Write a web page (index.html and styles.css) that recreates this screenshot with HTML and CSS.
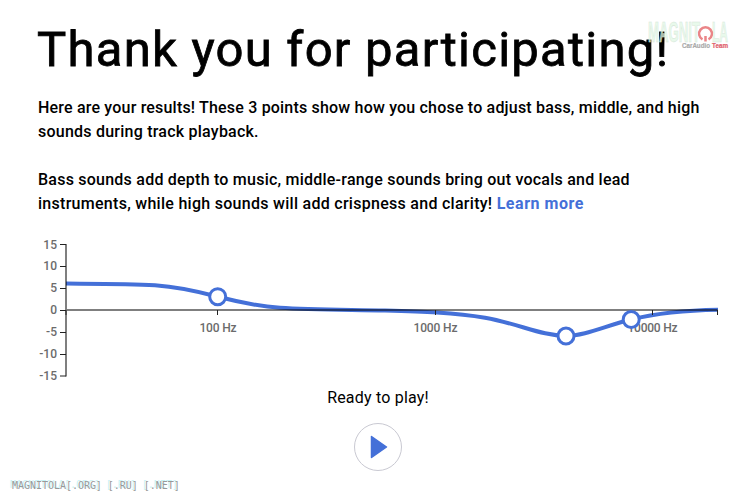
FILE: index.html
```html
<!DOCTYPE html>
<html lang="en">

<head>
    <meta charset="UTF-8">
    <meta name="viewport" content="width=device-width, initial-scale=1.0">
    <title>Your results</title>
    <link rel="stylesheet" href="styles.css">
</head>

<body>
    <main class="results">
        <h1 class="title">Thank you for participating!</h1>

        <p class="text">
            <span class="line line-1">Here are your results! These 3 points show how you chose to adjust bass, middle, and high</span>
            <span class="line line-2">sounds during track playback.</span>
        </p>
        <p class="text">
            <span class="line line-3">Bass sounds add depth to music, middle-range sounds bring out vocals and lead</span>
            <span class="line line-4">instruments, while high sounds will add crispness and clarity! <a class="link" href="#">Learn more</a></span>
        </p>

        <svg class="chart" width="710" height="154" viewBox="30 232 710 154">
            <!-- frequency labels -->
            <g class="labels labels-x">
                <text x="218" y="332" textLength="37">100 Hz</text>
                <text x="435.5" y="332" textLength="44">1000 Hz</text>
                <text x="652.5" y="332" textLength="50">10000 Hz</text>
            </g>
            <!-- gain labels -->
            <g class="labels labels-y">
                <text x="57" y="249">15</text>
                <text x="57" y="270">10</text>
                <text x="57" y="292">5</text>
                <text x="57" y="314">0</text>
                <text x="57" y="336">-5</text>
                <text x="57" y="358">-10</text>
                <text x="57" y="380">-15</text>
            </g>
            <path class="curve" d="M66 283.6C105 283.8 130 283.7 155 285.3C180 287 200 292 218 296.8C240 302.5 256 306 280 307.8C310 310 350 309.7 385 310.5C420 311.5 455 312.5 485 317.8C520 324 541 335.8 566 335.8C585 335.8 605 326 631 319.5C660 312.5 685 310.3 718 309.8" />
            <g class="axis">
                <path d="M66 244V376.5M66 310H717.5" />
            </g>
            <path class="tick" d="M60 244.5H66M60 266.5H66M60 288.5H66M60 310.5H66M60 332.5H66M60 354.5H66M60 376H66M66 310V315M217.5 310V315M435.5 310V315M652.5 310V315M717.5 310V315" />
            <circle class="point" cx="217.7" cy="296.7" r="8" />
            <circle class="point" cx="566" cy="336" r="8" />
            <circle class="point" cx="631.2" cy="319.5" r="8" />
        </svg>

        <div class="player">
            <span class="status">Ready to play!</span>
            <button class="play" aria-label="Play">
                <svg width="18" height="24" viewBox="0 0 18 24">
                    <path d="M1.5 1.5V22.5L16.5 12Z" />
                </svg>
            </button>
        </div>
    </main>

    <svg class="logo" width="84" height="32" viewBox="0 0 84 32">
        <g class="logo-name">
            <text x="1" y="21.5" textLength="52" lengthAdjust="spacingAndGlyphs">MAGNIT</text>
            <text x="65" y="21.5" textLength="16" lengthAdjust="spacingAndGlyphs">LA</text>
        </g>
        <path class="logo-ring" d="M55.5 19.3A6.4 6.4 0 1 1 61.5 19.3M58.5 16V21.5" />
        <text class="logo-sub" x="35" y="28" textLength="28" lengthAdjust="spacingAndGlyphs">CarAudio</text>
        <text class="logo-sub logo-team" x="65" y="28" textLength="16" lengthAdjust="spacingAndGlyphs">Team</text>
    </svg>

    <div class="domains">MAGNITOLA[.ORG] [.RU] [.NET]</div>
</body>

</html>
```
FILE: styles.css
```css
body {
    margin: 0;
    height: 495px;
    position: relative;
    overflow: hidden;
    background-color: #fff;
    color: #000;
    font-family: Roboto, sans-serif;
}

.results {
    padding: 20px 8px 0 37px;
}

.title {
    margin: 0 0 16px;
    font-size: 49px;
    line-height: 60px;
    font-weight: 400;
    letter-spacing: 1.25px;
    white-space: nowrap;
    -webkit-text-stroke: 0.8px #000;
}

.text {
    margin: 0 0 24px 1px;
    font-size: 16px;
    line-height: 24px;
    font-weight: 500;
}

.line {
    display: block;
    width: max-content;
    white-space: nowrap;
}

.line-1 {
    letter-spacing: 0.19px;
}

.line-2,
.line-3 {
    letter-spacing: 0.23px;
}

.line-4 {
    letter-spacing: 0.28px;
}

.link {
    color: #4470d8;
    font-weight: 700;
    letter-spacing: 0.55px;
    text-decoration: none;
}

.chart {
    display: block;
    margin: -8px 0 0 -7px;
}

.labels {
    fill: #6b6b6b;
    font-size: 12px;
    font-weight: 500;
}

.labels-x {
    text-anchor: middle;
}

.labels-y {
    text-anchor: end;
}

.curve {
    fill: none;
    stroke: #4470d8;
    stroke-width: 4;
}

.axis {
    fill: none;
    stroke: #000;
    stroke-opacity: 0.5;
    stroke-width: 2;
}

.tick {
    stroke: #222;
    stroke-width: 1;
}

.point {
    fill: #fff;
    stroke: #4470d8;
    stroke-width: 3;
}

.player {
    display: flex;
    flex-direction: column;
    align-items: center;
    width: 682px;
}

.status {
    font-size: 16px;
    line-height: 24px;
    letter-spacing: 0.2px;
}

.play {
    display: flex;
    align-items: center;
    justify-content: center;
    width: 48px;
    height: 48px;
    margin-top: 13px;
    padding: 0 0 0 2px;
    border: 1px solid #c9c9d2;
    border-radius: 50%;
    background-color: #fff;
}

.play path {
    fill: #4470d8;
    stroke: #4470d8;
    stroke-width: 1.5;
    stroke-linejoin: round;
}

/* partner logo over the title */
.logo {
    position: absolute;
    top: 20px;
    left: 647px;
    overflow: visible;
}

.logo-name {
    fill: #e1f7e5;
    fill-opacity: 0.75;
    stroke: #d5e6d8;
    stroke-width: 0.6;
    font-family: "Liberation Sans", sans-serif;
    font-size: 29px;
    font-weight: 700;
}

.logo-ring {
    fill: none;
    stroke: #ea8588;
    stroke-width: 2.5;
}

.logo-sub {
    fill: #aaa;
    font-family: "Liberation Sans", sans-serif;
    font-size: 7px;
    font-weight: 700;
    stroke: #aaa;
    stroke-width: 0.2;
}

.logo-team {
    fill: #e0606c;
    stroke: #e0606c;
}

.domains {
    position: absolute;
    left: 12px;
    top: 480px;
    color: #999;
    font-family: "DejaVu Sans Mono", monospace;
    font-size: 10px;
    line-height: 12px;
    letter-spacing: -0.03px;
    white-space: nowrap;
    text-shadow: -2px -1px 0 #c9f2f6;
}
```
